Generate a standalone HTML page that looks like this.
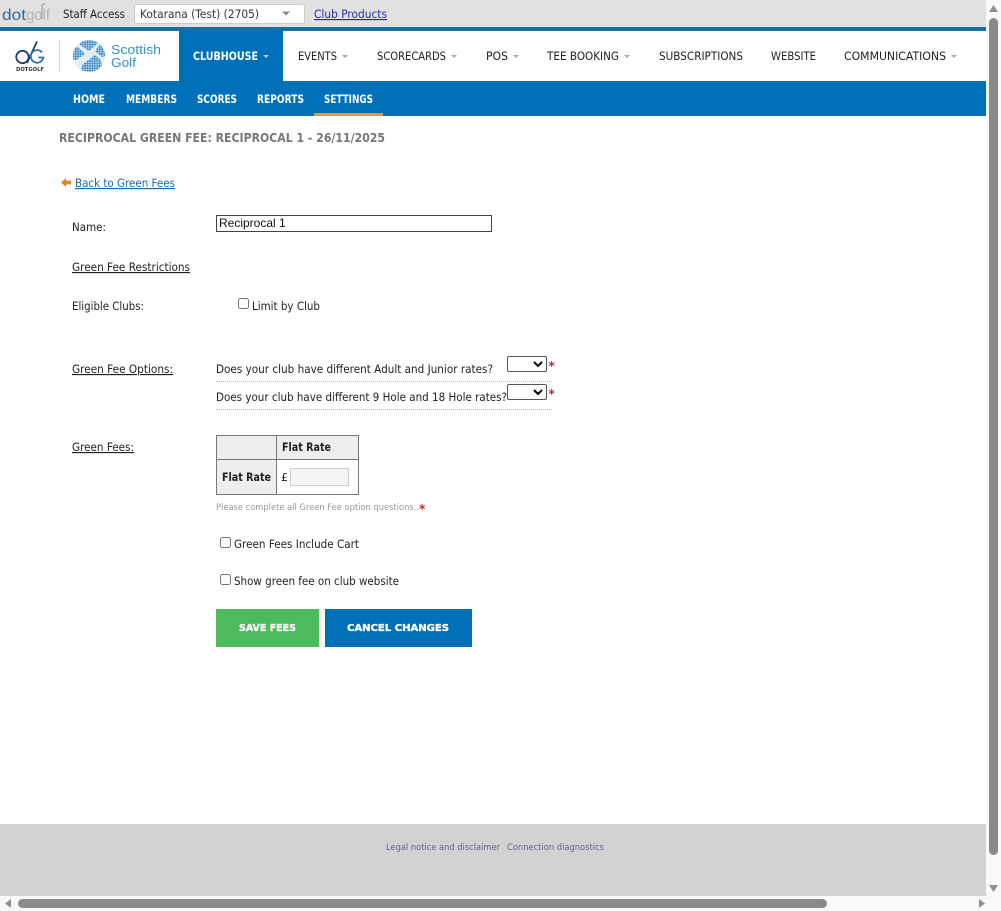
<!DOCTYPE html>
<html lang="en"><head><meta charset="utf-8"><title>Reciprocal Green Fee</title>
<style>
html,body{margin:0;padding:0;width:1001px;height:911px;overflow:hidden;background:#fff}
.b{position:absolute}
svg{position:absolute;left:0;top:0}
text{font-family:"DejaVu Sans",sans-serif;font-size:11.5px;fill:#222}
.u{text-decoration:underline}
select.s{position:absolute;width:40px;height:16px;margin:0;padding:0;background:#fff;border:1px solid #555;border-radius:2px;box-sizing:border-box}
input[type=checkbox]{position:absolute;margin:0;width:11px;height:11px}
</style></head><body>
<div class="b" style="left:0;top:0;width:986px;height:27px;background:#e3e0e0"></div>
<div class="b" style="left:0;top:27px;width:986px;height:4px;background:#186fa3"></div>
<div class="b" style="left:0;top:81px;width:986px;height:35px;background:#0070b9"></div>
<div class="b" style="left:179px;top:31px;width:104px;height:50px;background:#0070b9"></div>
<div class="b" style="left:314px;top:113px;width:69px;height:3px;background:#d49a5c"></div>
<div class="b" style="left:134px;top:4px;width:171px;height:20px;background:#fff;border:1px solid #ccc;border-radius:3px;box-sizing:border-box"></div>
<input class="b" type="text" value="Reciprocal 1" style="left:216px;top:215px;width:276px;height:17px;box-sizing:border-box;border:1px solid #444;padding:0 2px 2px;margin:0;font:12px 'Liberation Sans',sans-serif;color:#111;background:#fff;outline:0">
<input type="checkbox" style="left:238px;top:298px">
<select class="s" style="left:507px;top:356px"></select>
<select class="s" style="left:507px;top:384px"></select>
<div class="b" style="left:216px;top:381px;width:336px;border-top:1px dotted #bbb"></div>
<div class="b" style="left:216px;top:409px;width:336px;border-top:1px dotted #bbb"></div>
<table class="b" style="left:216px;top:435px;width:143px;height:60px;border-collapse:collapse;table-layout:fixed">
<tr style="height:24px"><td style="width:59px;background:#eee;border:1px solid #777;padding:0"></td><td style="background:#eee;border:1px solid #777;padding:0"></td></tr>
<tr><td style="background:#eee;border:1px solid #777;padding:0"></td><td style="background:#fff;border:1px solid #777;padding:0"></td></tr></table>
<input class="b" type="text" style="left:290px;top:468px;width:59px;height:18px;box-sizing:border-box;border:1px solid #ccc;background:#f5f5f5;margin:0;padding:0">
<input type="checkbox" style="left:220px;top:537px">
<input type="checkbox" style="left:220px;top:574px">
<div class="b" style="left:216px;top:609px;width:103px;height:38px;background:#4cbb5b"></div>
<div class="b" style="left:325px;top:609px;width:147px;height:38px;background:#0070b9"></div>
<div class="b" style="left:0;top:824px;width:986px;height:72px;background:#d2d2d2"></div>
<div class="b" style="left:986px;top:0;width:15px;height:911px;background:#f9f9f9"></div>
<div class="b" style="left:0;top:896px;width:986px;height:15px;background:#f9f9f9"></div>
<div class="b" style="left:989px;top:18px;width:9px;height:837px;background:#8a8a8a;border-radius:5px"></div>
<div class="b" style="left:18px;top:899px;width:809px;height:9px;background:#8a8a8a;border-radius:5px"></div>

<svg width="1001" height="911" viewBox="0 0 1001 911">
<defs>
<pattern id="d" width="2.4" height="2.4" patternUnits="userSpaceOnUse"><circle cx="1.2" cy="1.2" r="1.05" fill="#2a80c0"/></pattern>
<clipPath id="g"><circle cx="89" cy="56" r="16"/></clipPath>
</defs>
<!-- scrollbar arrows -->
<path d="M989 12l4.500-7 4.500 7z" fill="#8f8f8f"/>
<path d="M989 885l4.500 7 4.500-7z" fill="#8f8f8f"/>
<path d="M5 903.500l6-4.500v9z" fill="#8f8f8f"/>
<path d="M979 899l6 4.500-6 4.500z" fill="#8f8f8f"/>
<!-- dotgolf -->
<text x="2" y="20" textLength="24" lengthAdjust="spacingAndGlyphs" style="font-size:16px;fill:#2c6b99;font-family:'Liberation Sans',sans-serif">dot</text>
<text x="26" y="20" textLength="24" lengthAdjust="spacingAndGlyphs" style="font-size:16px;fill:#b5b5b5;font-family:'Liberation Sans',sans-serif">golf</text>
<path d="M42 19V6q0-2 3-2" fill="none" stroke="#999" stroke-width="1"/>
<text x="63" y="18" textLength="62" lengthAdjust="spacingAndGlyphs">Staff Access</text>
<text x="140" y="18" textLength="119" lengthAdjust="spacingAndGlyphs" style="fill:#333">Kotarana (Test) (2705)</text>
<path d="M282 11.500h8l-4 4z" fill="#888"/>
<text class="u" x="314" y="18" textLength="73" lengthAdjust="spacingAndGlyphs" style="fill:#2a2ab0">Club Products</text>
<!-- DG logo -->
<circle cx="22.500" cy="57" r="6.200" fill="none" stroke="#1d3f6b" stroke-width="1.800"/>
<path d="M27 63L37 41.500" fill="none" stroke="#1d3f6b" stroke-width="1.800"/>
<path d="M42 52.500a6.300 6.300 0 1 0 1.300 5h-5" fill="none" stroke="#2a6ea5" stroke-width="1.800"/>
<text x="16" y="71" textLength="28" lengthAdjust="spacingAndGlyphs" style="font-size:5.500px;font-weight:bold;fill:#333">DOTGOLF</text>
<rect x="59" y="40" width="1" height="32" fill="#d5d5d5"/>
<!-- Scottish Golf -->
<circle cx="89" cy="56" r="16" fill="#e3edf5"/>
<g clip-path="url(#g)" fill="url(#d)">
<path d="M79 39H99V42L89 51 80 45z"/><path d="M73 48L78 47 85 54 76 60 73 60z"/><path d="M100 44L105 50V56L102 57 95 51z"/><path d="M80 71L83 64 95 55 101 60 103 72z"/>
</g>
<text x="111" y="54" textLength="50" lengthAdjust="spacingAndGlyphs" style="font-size:12.500px;fill:#3d8fc4;font-family:'Liberation Sans',sans-serif">Scottish</text>
<text x="111" y="67" textLength="25" lengthAdjust="spacingAndGlyphs" style="font-size:12.500px;fill:#3d8fc4;font-family:'Liberation Sans',sans-serif">Golf</text>
<!-- nav -->
<text x="193" y="60" textLength="65" lengthAdjust="spacingAndGlyphs" style="fill:#fff;font-weight:bold;font-size:11.500px">CLUBHOUSE</text>
<text x="298" y="60" textLength="39" lengthAdjust="spacingAndGlyphs">EVENTS</text>
<text x="377" y="60" textLength="69" lengthAdjust="spacingAndGlyphs">SCORECARDS</text>
<text x="486" y="60" textLength="22" lengthAdjust="spacingAndGlyphs">POS</text>
<text x="547" y="60" textLength="72" lengthAdjust="spacingAndGlyphs">TEE BOOKING</text>
<text x="659" y="60" textLength="84" lengthAdjust="spacingAndGlyphs">SUBSCRIPTIONS</text>
<text x="771" y="60" textLength="45" lengthAdjust="spacingAndGlyphs">WEBSITE</text>
<text x="844" y="60" textLength="102" lengthAdjust="spacingAndGlyphs">COMMUNICATIONS</text>
<g fill="#a9a9a9">
<path d="M263 55h6l-3 3z" fill="#a9cfe8"/>
<path d="M342 55h6l-3 3z"/><path d="M451 55h6l-3 3z"/><path d="M513 55h6l-3 3z"/><path d="M624 55h6l-3 3z"/><path d="M951 55h6l-3 3z"/>
</g>
<!-- subnav -->
<text x="73" y="103" textLength="32" lengthAdjust="spacingAndGlyphs" style="fill:#fff;font-weight:bold;font-size:11.500px">HOME</text>
<text x="126" y="103" textLength="51" lengthAdjust="spacingAndGlyphs" style="fill:#fff;font-weight:bold;font-size:11.500px">MEMBERS</text>
<text x="197" y="103" textLength="40" lengthAdjust="spacingAndGlyphs" style="fill:#fff;font-weight:bold;font-size:11.500px">SCORES</text>
<text x="257" y="103" textLength="47" lengthAdjust="spacingAndGlyphs" style="fill:#fff;font-weight:bold;font-size:11.500px">REPORTS</text>
<text x="324" y="103" textLength="49" lengthAdjust="spacingAndGlyphs" style="fill:#fff;font-weight:bold;font-size:11.500px">SETTINGS</text>
<!-- content -->
<text x="59" y="142" textLength="326" lengthAdjust="spacingAndGlyphs" style="font-weight:bold;font-size:12.500px;fill:#777">RECIPROCAL GREEN FEE: RECIPROCAL 1 - 26/11/2025</text>
<path d="M61 182.500l5-4.500v2.500h5v4h-5v2.500z" fill="#d98a2b"/>
<text class="u" x="75" y="187" textLength="100" lengthAdjust="spacingAndGlyphs" style="fill:#1f6aa5">Back to Green Fees</text>
<text x="72" y="231" textLength="34" lengthAdjust="spacingAndGlyphs">Name:</text>
<text class="u" x="72" y="271" textLength="118" lengthAdjust="spacingAndGlyphs">Green Fee Restrictions</text>
<text x="72" y="310" textLength="72" lengthAdjust="spacingAndGlyphs">Eligible Clubs:</text>
<text x="252" y="310" textLength="68" lengthAdjust="spacingAndGlyphs">Limit by Club</text>
<text class="u" x="72" y="373" textLength="101" lengthAdjust="spacingAndGlyphs">Green Fee Options:</text>
<text x="216" y="373" textLength="277" lengthAdjust="spacingAndGlyphs">Does your club have different Adult and Junior rates?</text>
<text x="548.500" y="370" style="fill:#c3223a;font-size:12px;font-weight:bold">*</text>
<text x="216" y="401" textLength="291" lengthAdjust="spacingAndGlyphs">Does your club have different 9 Hole and 18 Hole rates?</text>
<text x="548.500" y="398" style="fill:#c3223a;font-size:12px;font-weight:bold">*</text>
<text class="u" x="72" y="451" textLength="62" lengthAdjust="spacingAndGlyphs">Green Fees:</text>
<text x="282" y="451" textLength="49" lengthAdjust="spacingAndGlyphs" style="font-weight:bold;font-size:11.500px">Flat Rate</text>
<text x="222" y="481" textLength="49" lengthAdjust="spacingAndGlyphs" style="font-weight:bold;font-size:11.500px">Flat Rate</text>
<text x="281" y="481" style="font-size:11px">£</text>
<text x="216" y="510" textLength="203" lengthAdjust="spacingAndGlyphs" style="font-size:9px;fill:#999">Please complete all Green Fee option questions..</text>
<text x="419" y="513" style="fill:#c3223a;font-size:12px;font-weight:bold">*</text>
<text x="234" y="548" textLength="125" lengthAdjust="spacingAndGlyphs">Green Fees Include Cart</text>
<text x="234" y="585" textLength="165" lengthAdjust="spacingAndGlyphs">Show green fee on club website</text>
<text x="239" y="631" textLength="57" lengthAdjust="spacingAndGlyphs" style="fill:#fff;stroke:#fff;stroke-width:.35px;font-weight:bold;font-size:9.500px">SAVE FEES</text>
<text x="347" y="631" textLength="102" lengthAdjust="spacingAndGlyphs" style="fill:#fff;stroke:#fff;stroke-width:.35px;font-weight:bold;font-size:9.500px">CANCEL CHANGES</text>
<text x="386" y="850" textLength="114" lengthAdjust="spacingAndGlyphs" style="font-size:9px;fill:#62628a">Legal notice and disclaimer</text>
<text x="507" y="850" textLength="97" lengthAdjust="spacingAndGlyphs" style="font-size:9px;fill:#62628a">Connection diagnostics</text>
</svg>
</body></html>
